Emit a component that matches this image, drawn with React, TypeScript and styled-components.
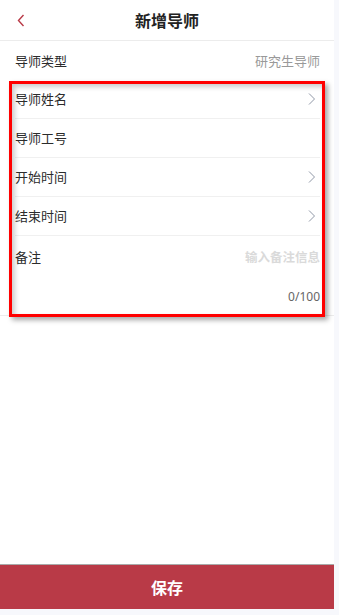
import React, { useState } from "react";
import styled, { createGlobalStyle } from "styled-components";

const Global = createGlobalStyle`
  html, body { margin: 0; padding: 0; background: #f7f8fc; }
  body { font-family: "Noto Sans CJK SC", "Noto Sans", sans-serif; }
  * { box-sizing: border-box; }
`;

const Page = styled.div`
  width: 334px;
  height: 609px;
  background: #ffffff;
  display: flex;
  flex-direction: column;
`;

const Header = styled.header`
  height: 41px;
  flex: none;
  display: grid;
  grid-template-columns: 60px 1fr 60px;
  align-items: center;
  border-bottom: 1px solid #ececec;
`;

const BackButton = styled.button`
  border: none;
  background: none;
  padding: 0 0 0 17px;
  height: 40px;
  display: flex;
  align-items: center;
  cursor: pointer;
`;

const Title = styled.h1`
  margin: 0;
  text-align: center;
  font-size: 16px;
  font-weight: 700;
  color: #222;
  line-height: 41px;
`;

const Row = styled.div<{ $divider?: boolean }>`
  height: 39px;
  margin: 0 14px 0 15px;
  display: flex;
  align-items: center;
  justify-content: space-between;
  padding-bottom: 1px;
  border-bottom: ${(p) => (p.$divider ? "1px solid #f0f0f0" : "none")};
`;

const Label = styled.span`
  font-size: 13px;
  color: #2b2b2b;
`;

const Value = styled.span`
  font-size: 13px;
  color: #999;
`;

const Group = styled.section`
  position: relative;
  border-bottom: 1px solid #ececec;
  &::after {
    content: "";
    position: absolute;
    top: 1px;
    left: 9px;
    right: 9px;
    bottom: -2px;
    border: 3px solid #ff0000;
    box-shadow: 3px 3px 5px rgba(0, 0, 0, 0.35), inset 3px 3px 5px rgba(0, 0, 0, 0.2);
    pointer-events: none;
  }
`;

const Remark = styled.div`
  margin: 0 14px 0 15px;
  display: flex;
  flex-direction: column;
  height: 79px;
`;

const RemarkTop = styled.div`
  display: flex;
  align-items: center;
  height: 41px;
  gap: 10px;
`;

const RemarkInput = styled.textarea`
  flex: 1;
  border: none;
  outline: none;
  resize: none;
  text-align: right;
  font-family: inherit;
  font-size: 12.5px;
  color: #333;
  height: 20px;
  padding: 0;
  line-height: 20px;
  overflow: hidden;
  &::placeholder { color: #dadada; font-weight: 700; }
`;

const Counter = styled.div`
  margin-top: auto;
  margin-bottom: 10px;
  text-align: right;
  font-size: 12px;
  color: #666;
  font-family: "Noto Sans", "Liberation Sans", sans-serif;
`;

const Spacer = styled.div`
  flex: 1;
`;

const SaveButton = styled.button`
  flex: none;
  height: 45px;
  border: none;
  border-top: 1px solid #a9a9a9;
  background: #b93a47;
  color: #fff;
  font-family: inherit;
  font-size: 16px;
  font-weight: 700;
  cursor: pointer;
`;

const Chevron = styled.svg`
  margin-right: 4px;
  flex: none;
`;

const Arrow = () => (
  <Chevron width="8" height="12" viewBox="0 0 8 12">
    <path d="M1 0.5 L6.5 6 L1 11.5" fill="none" stroke="#8f97a6" strokeWidth="1" />
  </Chevron>
);

export default function App() {
  const [remark, setRemark] = useState("");
  return (
    <>
      <Global />
      <Page>
        <Header>
          <BackButton aria-label="back">
            <svg width="8" height="13" viewBox="0 0 8 13">
              <path d="M6.5 1 L1.5 6.5 L6.5 12" fill="none" stroke="#b93a47" strokeWidth="1.4" />
            </svg>
          </BackButton>
          <Title>新增导师</Title>
          <span />
        </Header>
        <Row>
          <Label>导师类型</Label>
          <Value>研究生导师</Value>
        </Row>
        <Group>
          <Row $divider>
            <Label>导师姓名</Label>
            <Arrow />
          </Row>
          <Row $divider>
            <Label>导师工号</Label>
          </Row>
          <Row $divider>
            <Label>开始时间</Label>
            <Arrow />
          </Row>
          <Row $divider>
            <Label>结束时间</Label>
            <Arrow />
          </Row>
          <Remark>
            <RemarkTop>
              <Label>备注</Label>
              <RemarkInput
                placeholder="输入备注信息"
                maxLength={100}
                value={remark}
                onChange={(e) => setRemark(e.target.value)}
              />
            </RemarkTop>
            <Counter>{remark.length}/100</Counter>
          </Remark>
        </Group>
        <Spacer />
        <SaveButton>保存</SaveButton>
      </Page>
    </>
  );
}
